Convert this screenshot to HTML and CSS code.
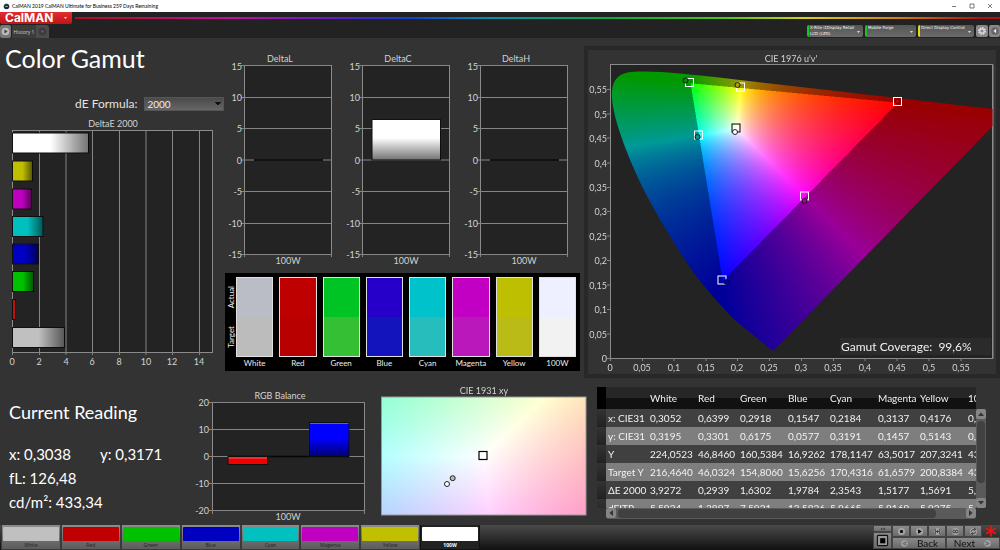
FILE: index.html
```html
<!DOCTYPE html>
<html lang="en">
<head>
<meta charset="utf-8">
<title>CalMAN 2019 CalMAN Ultimate for Business</title>
<link rel="stylesheet" href="styles.css">
</head>
<body>
<div class="app">
  <header class="titlebar">
    <svg class="app-icon" viewBox="0 0 8 8"><circle cx="4" cy="4" r="3.2" fill="#1b2a3a"/><path d="M1.5 2.5A3 3 0 0 1 5 1.3" stroke="#3d8a4c" fill="none"/><path d="M2.5 4h3" stroke="#dde" stroke-width=".8"/></svg>
    <span class="window-title">CalMAN 2019 CalMAN Ultimate for Business 259 Days Remaining</span>
    <div class="window-buttons">
      <button aria-label="Minimize"><svg viewBox="0 0 6 6"><path d="M1 3.5h4" stroke="#444" stroke-width=".7"/></svg></button>
      <button aria-label="Maximize"><svg viewBox="0 0 6 6"><path d="M1 1h4v4h-4z" stroke="#444" stroke-width=".7" fill="none"/></svg></button>
      <button aria-label="Close"><svg viewBox="0 0 6 6"><path d="M1 1l4 4M5 1l-4 4" stroke="#444" stroke-width=".7"/></svg></button>
    </div>
  </header>

  <div class="brandbar">
    <button class="brand"><span>CalMAN</span><svg viewBox="0 0 6 4"><path d="M1 1h4l-2 2z" fill="#fff"/></svg></button>
    <div class="rainbow"></div>
  </div>

  <nav class="tabs">
    <button class="play-tab" aria-label="Play"><svg viewBox="0 0 10 10"><circle cx="5" cy="5" r="3.5" fill="#bbb"/><path d="M4 3.2l3 1.8-3 1.8z" fill="#444"/></svg></button>
    <button class="history-tab">History 1</button>
    <button class="add-tab" aria-label="Add history"><svg viewBox="0 0 10 10"><circle cx="5" cy="5" r="3" fill="#3c3c3c"/><path d="M5 4v2M4 5h2" stroke="#666" stroke-width=".7"/></svg></button>
    <div class="devices">
      <button class="device green"><span>X-Rite i1Display Retail<br>LCD (LED)</span><svg viewBox="0 0 6 4"><path d="M1 1h4l-2 2z" fill="#fff"/></svg></button>
      <button class="device green narrow"><span>Mobile Forge</span><svg viewBox="0 0 6 4"><path d="M1 1h4l-2 2z" fill="#fff"/></svg></button>
      <button class="device yellow"><span>Direct Display Control</span><svg viewBox="0 0 6 4"><path d="M1 1h4l-2 2z" fill="#fff"/></svg></button>
      <button class="tool" aria-label="Settings"><svg viewBox="0 0 10 10"><circle cx="5" cy="5" r="2.6" fill="none" stroke="#ddd" stroke-width="1.4" stroke-dasharray="1.3 .7"/><circle cx="5" cy="5" r="1.8" fill="none" stroke="#ddd"/></svg></button>
      <button class="tool" aria-label="Collapse"><svg viewBox="0 0 10 10"><circle cx="5.5" cy="5" r="3.5" fill="#666"/><path d="M6.500 3v4l-2.500-2z" fill="#eee"/></svg></button>
    </div>
  </nav>

  <main>
    <div class="top-row">
      <section class="gamut">
        <h1>Color Gamut</h1>
        <div class="formula">
          <label for="formula">dE Formula:</label>
          <select id="formula"><option>2000</option><option>1994</option><option>1976</option></select>
        </div>
        <svg class="chart" viewBox="0 116 225 254" role="img" aria-label="DeltaE 2000">
          <defs>
            <linearGradient id="fade-right"><stop offset=".5" stop-color="#000" stop-opacity="0"/><stop offset="1" stop-color="#000" stop-opacity=".55"/></linearGradient>
            <linearGradient id="fade-down" x2="0" y2="1"><stop offset=".45" stop-color="#000" stop-opacity="0"/><stop offset="1" stop-color="#000" stop-opacity=".55"/></linearGradient>
          </defs>
          <rect class="plot" x="12.500" y="130.500" width="200" height="222"/>
          <path class="grid" d="M39.500 130V355M66 130V355M92.500 130V355M119.500 130V355M146 130V355M172.500 130V355M199.500 130V355M12.500 352V355"/>
          <g class="bars">
            <rect x="12.500" y="133" width="76" height="20" fill="#fff"/>
            <rect x="12.500" y="161" width="20" height="20" fill="#bfbf00"/>
            <rect x="12.500" y="189" width="19" height="20" fill="#c000c0"/>
            <rect x="12.500" y="216.500" width="30.500" height="20" fill="#00bfbf"/>
            <rect x="12.500" y="244" width="26" height="20" fill="#0000c0"/>
            <rect x="12.500" y="271.500" width="21" height="20" fill="#00c000"/>
            <rect x="12.500" y="299.500" width="3" height="20" fill="#c01010"/>
            <rect x="12.500" y="327.500" width="52" height="20" fill="#c0c0c0"/>
          </g>
          <g class="shade">
            <rect x="12.500" y="133" width="76" height="20"/><rect x="12.500" y="161" width="20" height="20"/><rect x="12.500" y="189" width="19" height="20"/><rect x="12.500" y="216.500" width="30.500" height="20"/><rect x="12.500" y="244" width="26" height="20"/><rect x="12.500" y="271.500" width="21" height="20"/><rect x="12.500" y="327.500" width="52" height="20"/>
          </g>
          <g class="label mid">
            <text x="113" y="127">DeltaE 2000</text>
            <text x="12" y="365">0</text><text x="39" y="365">2</text><text x="66" y="365">4</text><text x="92" y="365">6</text><text x="119" y="365">8</text><text x="146" y="365">10</text><text x="172" y="365">12</text><text x="199" y="365">14</text>
          </g>
        </svg>
      </section>

      <section class="deltas">
        <svg class="chart" viewBox="225 50 355 218" role="img" aria-label="DeltaL, DeltaC and DeltaH">
          <defs>
            <g id="delta-axes">
              <rect class="plot" x="244.500" y="65.500" width="87" height="189"/>
              <path class="grid" d="M241 65.500H331M241 97.500H331M241 128.500H331M241 160H331M241 191.500H331M241 223.500H331M241 254.500H331M244.500 254V257M331.500 254V257"/>
              <g class="label end">
                <text x="242" y="70">15</text><text x="242" y="101">10</text><text x="242" y="132">5</text><text x="242" y="164">0</text><text x="242" y="195">-5</text><text x="242" y="227">-10</text><text x="242" y="258">-15</text>
              </g>
              <text class="label mid" x="288" y="264">100W</text>
            </g>
          </defs>
          <use href="#delta-axes"/><use href="#delta-axes" x="118"/><use href="#delta-axes" x="236"/>
          <g class="label mid"><text x="280" y="62">DeltaL</text><text x="398" y="62">DeltaC</text><text x="516" y="62">DeltaH</text></g>
          <path d="M254 160H323M490 160H559" stroke="#111" stroke-width="2"/>
          <g class="bars"><rect x="372" y="119.500" width="68.500" height="40.500" fill="#fff"/></g>
          <rect x="372" y="119.500" width="68.500" height="40.500" fill="url(#fade-down)"/>
        </svg>
        <div class="swatches">
          <div class="side"><span>Actual</span><span>Target</span></div>
          <figure class="white"><div></div><figcaption>White</figcaption></figure>
          <figure class="red"><div></div><figcaption>Red</figcaption></figure>
          <figure class="green"><div></div><figcaption>Green</figcaption></figure>
          <figure class="blue"><div></div><figcaption>Blue</figcaption></figure>
          <figure class="cyan"><div></div><figcaption>Cyan</figcaption></figure>
          <figure class="magenta"><div></div><figcaption>Magenta</figcaption></figure>
          <figure class="yellow"><div></div><figcaption>Yellow</figcaption></figure>
          <figure class="full"><div></div><figcaption>100W</figcaption></figure>
        </div>
      </section>

      <section class="cie76">
        <svg class="chart" viewBox="588 50 408 324" role="img" aria-label="CIE 1976 u'v'">
          <rect class="plot" x="610.500" y="64.500" width="382" height="294"/>
          <foreignObject x="610.500" y="65" width="382" height="293"><canvas id="uv" width="764" height="586"></canvas></foreignObject>
          <path class="frame" d="M610.500 64.500H993V358.500H610.500z"/>
          <path class="grid" d="M607 358.500h3M607 334h3M607 309.500h3M607 285h3M607 260.500h3M607 236h3M607 211.500h3M607 187.500h3M607 163h3M607 138h3M607 114h3M607 89.500h3M610.500 358v3M642.500 358v3M674 358v3M706 358v3M737.500 358v3M769.500 358v3M801.500 358v3M833.500 358v3M865 358v3M897 358v3M929 358v3M961 358v3"/>
          <g class="label end">
            <text x="607" y="362">0</text><text x="607" y="338">0,05</text><text x="607" y="313">0,1</text><text x="607" y="289">0,15</text><text x="607" y="264">0,2</text><text x="607" y="240">0,25</text><text x="607" y="215">0,3</text><text x="607" y="191">0,35</text><text x="607" y="167">0,4</text><text x="607" y="142">0,45</text><text x="607" y="118">0,5</text><text x="607" y="93">0,55</text>
          </g>
          <g class="label mid">
            <text x="791" y="62">CIE 1976 u'v'</text>
            <text x="610" y="371">0</text><text x="642" y="371">0,05</text><text x="674" y="371">0,1</text><text x="706" y="371">0,15</text><text x="737" y="371">0,2</text><text x="769" y="371">0,25</text><text x="801" y="371">0,3</text><text x="833" y="371">0,35</text><text x="865" y="371">0,4</text><text x="897" y="371">0,45</text><text x="929" y="371">0,5</text><text x="961" y="371">0,55</text>
          </g>
          <g fill="none" stroke="#fff">
            <rect x="685.500" y="78.500" width="8" height="8"/><rect x="736.500" y="83" width="8" height="8"/><rect x="893.500" y="97.500" width="8" height="8"/><rect x="694.500" y="131" width="8" height="8"/><rect x="800.500" y="192" width="8" height="8"/><rect x="718" y="276" width="8" height="8"/>
            <rect x="732" y="124" width="8" height="8" stroke="#000"/>
          </g>
          <g stroke="#111" stroke-width=".9">
            <circle cx="685.500" cy="80.500" r="2.500" fill="#009000"/><circle cx="737.500" cy="85" r="2.500" fill="#b0a000"/><circle cx="897.500" cy="101.500" r="2.300" fill="#c00010"/><circle cx="697.500" cy="137" r="2.500" fill="#009a9a"/><circle cx="804.500" cy="201" r="2.500" fill="#a000a0"/><circle cx="726.500" cy="282" r="2.500" fill="#0000a0" stroke="#000070"/><circle cx="735" cy="132" r="2.500" fill="#fff"/>
          </g>
          <rect x="840" y="338" width="151" height="17" fill="#2b2b2b"/>
          <text class="coverage" x="841" y="351">Gamut Coverage: &#160;99,6%</text>
        </svg>
      </section>
    </div>

    <div class="bottom-row">
      <section class="reading">
        <h2>Current Reading</h2>
        <p><span>x: 0,3038</span><span>y: 0,3171</span></p>
        <p>fL: 126,48</p>
        <p>cd/m²: 433,34</p>
      </section>
      <svg class="chart" viewBox="190 384 180 140" role="img" aria-label="RGB Balance">
        <rect class="plot" x="212.500" y="402.500" width="152" height="108"/>
        <path class="grid" d="M209 402.500H364M209 429.500H364M209 456.500H364M209 483.500H364M209 510.500H364M212.500 510V514M364.500 510V514"/>
        <path d="M228 456.500H349" stroke="#050505" stroke-width="1.500"/>
        <g class="bars"><rect x="228" y="456.500" width="39.500" height="8" fill="#f00000"/><rect x="309.500" y="422.500" width="39.500" height="34" fill="#0000ff"/></g>
        <rect x="309.500" y="422.500" width="39.500" height="34" fill="url(#fade-down)"/>
        <path d="M228.500 458H267M310 423.500H348.500" stroke="#fff" stroke-opacity=".35"/>
        <g class="label end"><text x="209" y="406">20</text><text x="209" y="433">10</text><text x="209" y="460">0</text><text x="209" y="487">-10</text><text x="209" y="514">-20</text></g>
        <g class="label mid"><text x="280" y="399">RGB Balance</text><text x="288" y="520">100W</text></g>
      </svg>
      <svg class="chart" viewBox="370 384 220 140" role="img" aria-label="CIE 1931 xy">
        <foreignObject x="382" y="397" width="204" height="118"><canvas id="xy" width="204" height="118"></canvas></foreignObject>
        <rect x="381.500" y="397" width="204.500" height="118" fill="none" stroke="#999"/>
        <text class="label mid" x="484" y="394">CIE 1931 xy</text>
        <rect x="479" y="451.500" width="8" height="8" fill="#fff" stroke="#000" stroke-width="1.200"/>
        <circle cx="452.700" cy="478.200" r="2.500" fill="#bbb" stroke="#222"/><circle cx="447" cy="484" r="2.500" fill="#fff" stroke="#222"/>
      </svg>
      <section class="results">
        <div class="table-window">
          <table>
            <colgroup><col class="c-handle"><col class="c-narrow"><col class="c-wide"><col class="c-narrow"><col class="c-wide"><col class="c-narrow"><col class="c-wide"><col class="c-narrow"><col class="c-wide"><col class="c-wide"></colgroup>
            <thead><tr><td></td><td></td><th>White</th><th>Red</th><th>Green</th><th>Blue</th><th>Cyan</th><th>Magenta</th><th>Yellow</th><th>100W</th></tr></thead>
            <tbody>
              <tr><td></td><th>x: CIE31</th><td>0,3052</td><td>0,6399</td><td>0,2918</td><td>0,1547</td><td>0,2184</td><td>0,3137</td><td>0,4176</td><td>0,3038</td></tr>
              <tr><td></td><th>y: CIE31</th><td>0,3195</td><td>0,3301</td><td>0,6175</td><td>0,0577</td><td>0,3191</td><td>0,1457</td><td>0,5143</td><td>0,3171</td></tr>
              <tr><td></td><th>Y</th><td>224,0523</td><td>46,8460</td><td>160,5384</td><td>16,9262</td><td>178,1147</td><td>63,5017</td><td>207,3241</td><td>433,3400</td></tr>
              <tr><td></td><th>Target Y</th><td>216,4640</td><td>46,0324</td><td>154,8060</td><td>15,6256</td><td>170,4316</td><td>61,6579</td><td>200,8384</td><td>433,3400</td></tr>
              <tr><td></td><th>ΔE 2000</th><td>3,9272</td><td>0,2939</td><td>1,6302</td><td>1,9784</td><td>2,3543</td><td>1,5177</td><td>1,5691</td><td>5,7500</td></tr>
              <tr><td></td><th>dEITP</th><td>5,5924</td><td>1,3897</td><td>7,5921</td><td>12,5826</td><td>5,9665</td><td>5,9169</td><td>5,9275</td><td>5,9000</td></tr>
            </tbody>
          </table>
        </div>
        <div class="scroll vertical">
          <button aria-label="Scroll up"><svg viewBox="0 0 8 8"><path d="M1 6l3-3.500 3 3.500z"/></svg></button><div class="thumb"></div><button aria-label="Scroll down"><svg viewBox="0 0 8 8"><path d="M1 2l3 3.500 3-3.500z"/></svg></button>
        </div>
        <div class="scroll horizontal">
          <button aria-label="Scroll left"><svg viewBox="0 0 8 8"><path d="M6 1l-3.500 3 3.500 3z"/></svg></button><div class="thumb"></div><button aria-label="Scroll right"><svg viewBox="0 0 8 8"><path d="M2 1l3.500 3-3.500 3z"/></svg></button>
        </div>
      </section>
    </div>
  </main>

  <footer>
    <div class="patches">
      <button class="white"><i></i>White</button>
      <button class="red"><i></i>Red</button>
      <button class="green"><i></i>Green</button>
      <button class="blue"><i></i>Blue</button>
      <button class="cyan"><i></i>Cyan</button>
      <button class="magenta"><i></i>Magenta</button>
      <button class="yellow"><i></i>Yellow</button>
      <button class="full selected"><i></i>100W</button>
    </div>
    <div class="controls">
      <div class="stop-column">
        <button aria-label="Camera"><svg viewBox="0 0 10 8"><ellipse cx="5" cy="4" rx="3" ry="1.800" fill="#444"/><circle cx="5" cy="4" r=".8" fill="#ccc"/></svg></button>
        <button class="stop" aria-label="Stop"><svg viewBox="0 0 14 14"><rect x="1.500" y="1.500" width="11" height="11" rx="1" fill="#999" stroke="#111" stroke-width="1.200"/><rect x="4.500" y="4.500" width="5.500" height="5.500"/></svg></button>
      </div>
      <div class="transport">
        <button aria-label="Stop reading"><svg viewBox="0 0 10 10"><circle cx="5" cy="5" r="4" fill="#a4a4a4"/><path d="M3.500 3.500h3v3h-3z"/></svg></button>
        <button aria-label="Play reading"><svg viewBox="0 0 10 10"><circle cx="5" cy="5" r="4" fill="#a4a4a4"/><path d="M3.500 2.500l4 2.500-4 2.500z"/></svg></button>
        <button aria-label="Read series"><svg viewBox="0 0 10 10"><circle cx="5" cy="5" r="4" fill="#a4a4a4"/><path d="M2.500 2v6M7.500 2v6M3.500 5h3M5 3.500v3" stroke="#333"/></svg></button>
        <button aria-label="Read continuously"><svg viewBox="0 0 10 10"><circle cx="5" cy="5" r="4" fill="#a4a4a4"/><circle cx="3.500" cy="5" r="1.500" fill="none" stroke="#333"/><circle cx="6.500" cy="5" r="1.500" fill="none" stroke="#333"/></svg></button>
        <button aria-label="Refresh"><svg viewBox="0 0 10 10"><circle cx="5" cy="5" r="4" fill="#a4a4a4"/><path d="M2.500 5q0-2.500 4-2.500M7.500 5q0 2.500-4 2.500M5.500 1l2 1.500-2 1.500M4.500 6l-2 1.500 2 1.500" fill="none" stroke="#333"/></svg></button>
        <svg class="alert" viewBox="0 0 12 12"><path d="M6 .5v11M1.200 3.200l9.600 5.600M10.800 3.200l-9.600 5.600" stroke="#f01212" stroke-width="1.700"/></svg>
      </div>
      <div class="steps">
        <button><svg viewBox="0 0 10 10"><circle cx="5" cy="5" r="3.700" fill="#a4a4a4"/><path d="M5.500 3l-2 2 2 2M7.500 3l-2 2 2 2" fill="none" stroke="#333" stroke-width=".8"/></svg>Back</button>
        <button>Next<svg viewBox="0 0 10 10"><circle cx="5" cy="5" r="3.700" fill="#a4a4a4"/><path d="M2.500 3l2 2-2 2M4.500 3l2 2-2 2" fill="none" stroke="#333" stroke-width=".8"/></svg></button>
      </div>
    </div>
  </footer>
</div>
<script src="charts.js"></script>
</body>
</html>
```

FILE: styles.css
```css
* { box-sizing: border-box; }
body { margin: 0; background: #333; color: #e4e4e4; font-family: Lato, "Open Sans", sans-serif; font-size: 10px; }
button { margin: 0; padding: 0; border: 0; background: none; color: inherit; font-family: inherit; font-size: inherit; }
svg { display: block; }
.app { min-height: 100vh; display: flex; flex-direction: column; overflow: hidden; }

.titlebar { height: 12px; background: #fff; color: #000; display: flex; align-items: center; padding: 0 4px 0 3px; gap: 2px; font: 5px Lato, sans-serif; }
.app-icon { width: 7px; height: 7px; }
.window-buttons { margin-left: auto; display: flex; gap: 12px; padding-right: 3px; }
.window-buttons svg { width: 6px; height: 6px; }

.brandbar { height: 12px; background: #222; display: flex; align-items: center; }
.brand { width: 72px; height: 12px; display: flex; align-items: center; justify-content: space-between; padding: 0 4px 0 5px; background: linear-gradient(#e03030, #c01418); color: #fff; font: bold 12px/12px Inter, sans-serif; border-radius: 0 0 2px 2px; }
.brand svg { width: 5px; height: 4px; }
.rainbow { flex: 1; height: 2px; margin-left: 3px; background: linear-gradient(90deg, #b01018, #c010a0 17%, #5a20c8 29%, #1040d0 36%, #0890b0 45%, #10a840 58%, #50c020 70%, #d8d020 79%, #d08018 89%, #b01010 98%); }

.tabs { height: 14px; background: #222; display: flex; align-items: stretch; padding-top: 1px; font: 5px "Open Sans", sans-serif; }
.play-tab { width: 11px; background: #777; border-radius: 2px; }
.play-tab svg, .add-tab svg, .tool svg { width: 100%; height: 100%; }
.history-tab { width: 24px; margin-left: 1px; background: #3c3c3c; color: #ccc; }
.add-tab { width: 13px; background: #4c4c4c; border-radius: 0 3px 0 0; }
.devices { margin-left: auto; display: flex; gap: 2px; }
.device { width: 56px; height: 12px; display: flex; align-items: flex-start; justify-content: space-between; text-align: left; background: linear-gradient(#555, #6a6a6a); border-left: 2px solid #1fc01f; border-radius: 2px; line-height: 5px; padding: 0 2px 0 1px; white-space: nowrap; color: #fff; font: 4px/6px "DejaVu Sans", sans-serif; }
.device.narrow { width: 51px; }
.device.yellow { border-color: #e0e010; }
.device svg { width: 5px; height: 4px; margin: 5px 0 0 -2px; flex: none; }
.tool { width: 12px; height: 12px; background: #888; border-radius: 2px; }
.tool + .tool { margin-left: -1px; width: 11px; }

main { flex: 1; background: #333; }
.top-row { display: grid; grid-template-columns: 225fr 359fr 416fr; padding-top: 8px; align-items: start; }
h1 { margin: 0; padding-left: 5px; font-weight: 400; font-size: 25px; line-height: 25px; color: #fff; }
.formula { display: flex; align-items: center; gap: 7px; height: 13px; margin: 26px 0 6px 0; padding: 0 1px 0 75px; font-size: 12px; }
.formula label { white-space: nowrap; }
select { appearance: none; flex: 1; min-width: 0; height: 14px; border: 1px solid #555; border-radius: 0; padding: 0 2px; color: #eee; font: 10px/12px Lato, sans-serif; background: linear-gradient(to bottom left, #111 50%, transparent 50%) right 5px center / 3px 4px no-repeat, linear-gradient(to bottom right, #111 50%, transparent 50%) right 2px center / 3px 4px no-repeat, linear-gradient(#4a4a4a, #666); }
.chart { width: 100%; height: auto; }
.plot { fill: #232323; stroke: #8b8b8b; }
.frame { fill: none; stroke: #8b8b8b; }
.grid { fill: none; stroke: #858585; }
.label { fill: #d2d2d2; font-size: 9px; }
.mid { text-anchor: middle; }
.end { text-anchor: end; }
.bars { stroke: #101010; }
.shade { fill: url(#fade-right); }
.coverage { fill: #f0f0f0; font-size: 12px; }
canvas { display: block; width: 100%; height: 100%; }

.deltas { padding: 4px 4px 0 0; }
.swatches { background: #000; margin-top: 5px; padding: 4px 4px 0 1px; height: 98px; display: flex; gap: 6px; color: #eee; font-size: 8px; }
.side { width: 10px; height: 80px; display: flex; flex-direction: column; justify-content: space-around; align-items: center; margin-right: -6px; flex: none; }
.side span { writing-mode: vertical-rl; transform: rotate(180deg); line-height: 9px; }
figure { margin: 0; flex: 1; min-width: 0; display: flex; flex-direction: column; align-items: center; }
figure div { width: 100%; height: 80px; border: 1px solid #e0e0e0; background: linear-gradient(var(--actual) 50%, var(--target) 50%); }
figcaption { line-height: 13px; }
.white { --actual: #babdc5; --target: #bcbcbc; --patch: #c0c0c0; }
.red { --actual: #be0000; --target: #b80000; --patch: #c00000; }
.green { --actual: #00c324; --target: #34bf34; --patch: #00c000; }
.blue { --actual: #2600c8; --target: #1414bc; --patch: #0000c0; }
.cyan { --actual: #00c2ca; --target: #28bdbd; --patch: #00c0c0; }
.magenta { --actual: #c200c4; --target: #bb18bb; --patch: #c000c0; }
.yellow { --actual: #bdbf00; --target: #bbbb18; --patch: #c0c000; }
.full { --actual: #eef0ff; --target: #f2f2f2; --patch: #fff; }

.cie76 { border: 4px solid #282828; }

.bottom-row { display: grid; grid-template-columns: 190fr 180fr 220fr 410fr; align-items: start; padding-top: 5px; }
.reading { padding: 19px 0 0 9px; color: #fff; }
h2 { margin: 0 0 20px; font-weight: 400; font-size: 18px; line-height: 20px; }
.reading p { margin: 0; font-size: 15px; line-height: 24px; display: flex; gap: 29px; white-space: nowrap; }
.bottom-row .chart { margin-top: 1px; }
.results { display: grid; grid-template-columns: 1fr 10px; grid-template-rows: 22px 99px 11px; padding: 4px 14px 0 7px; }
.table-window { grid-area: 1 / 1 / 3 / 2; overflow: hidden; }
table { border-collapse: collapse; table-layout: fixed; width: 410px; color: #f2f2f2; }
.c-handle { width: 9px; }
.c-narrow { width: 42px; }
.c-wide { width: 48px; }
th, td { height: 18px; padding: 0 0 0 2px; text-align: left; font-weight: 400; line-height: 16px; white-space: nowrap; }
thead th, thead td { height: 22px; background: linear-gradient(#262626 50%, #111 50%); }
thead td:first-child { background: #000; }
tbody tr { background: #404040; }
tbody tr:nth-child(even) { background: #7e7e7e; }
tbody td:first-child { background: linear-gradient(#333, #222); }
.scroll { background: #5a5a5a; display: flex; border-radius: 3px; }
.scroll button { width: 10px; height: 10px; background: #858585; border-radius: 2px; flex: none; }
.scroll svg { width: 8px; height: 8px; margin: 1px; fill: #333; }
.thumb { background: #414141; border-radius: 4px; }
.vertical { grid-area: 2 / 2; flex-direction: column; justify-content: space-between; }
.vertical .thumb { height: 62px; margin: 2px 1px auto; }
.horizontal { grid-area: 3 / 1; margin-left: 9px; justify-content: space-between; }
.horizontal .thumb { width: 86%; margin: 1px auto 0 2px; height: 9px; }

footer { height: 25px; background: linear-gradient(#4a4a4a, #111); display: flex; justify-content: space-between; }
.patches { display: flex; flex: 0 0 48%; padding-left: 1px; }
.patches button { flex: 1; min-width: 0; background: linear-gradient(#8c8c8c, #5c5c5c); border: 1px solid #3a3a3a; border-top: 0; padding: 2px 1px 0; font: 5px/8px "Open Sans", sans-serif; color: #222; }
.patches i { display: block; height: 14px; background: var(--patch); border-radius: 1px; }
.patches .selected { background: #222; color: #fff; font-weight: 700; border-color: #111; }
.controls { display: grid; grid-template: 12px 12px / 19px 1fr; width: 127px; padding-bottom: 1px; }
.controls button { background: linear-gradient(#8a8a8a, #6a6a6a); border: 1px solid #444; }
.stop-column { grid-row: 1 / 3; display: flex; flex-direction: column; }
.stop-column button { height: 7px; display: flex; justify-content: center; align-items: center; }
.stop-column svg { width: 10px; height: 6px; }
.stop-column .stop { height: 17px; }
.stop-column .stop svg { width: 13px; height: 13px; }
.transport { display: flex; }
.transport button { flex: 1; display: flex; justify-content: center; align-items: center; }
.transport button svg { width: 9px; height: 9px; }
.alert { width: 12px; height: 12px; margin: 0 3px; }
.steps { display: flex; color: #111; font-size: 10px; }
.steps button { flex: 1; display: flex; align-items: center; justify-content: center; gap: 8px; line-height: 10px; }
.steps svg { width: 9px; height: 9px; }
```

FILE: charts.js
```js
// Wavelength locus, CIE 1931 x,y pairs from violet to red.
const LOCUS = [
  [.1733, .0048], [.1714, .0051], [.1644, .0109], [.1566, .0177], [.1440, .0297], [.1241, .0578],
  [.1096, .0868], [.0913, .1327], [.0687, .2007], [.0454, .2950], [.0235, .4127], [.0082, .5384],
  [.0039, .6548], [.0139, .7502], [.0389, .8120], [.0743, .8338], [.1142, .8262], [.1547, .8059],
  [.2296, .7543], [.3016, .6923], [.3731, .6245], [.4441, .5547], [.5125, .4866], [.5752, .4242],
  [.6270, .3725], [.6915, .3083], [.7347, .2653]
];

// Brightest displayable colour for a chromaticity; dimmed when it is out of gamut.
function colour(x, y, dim) {
  const X = x / y, Z = (1 - x - y) / y;
  const lin = [
    3.2406 * X - 1.5372 - 0.4986 * Z,
    -0.9689 * X + 1.8758 + 0.0415 * Z,
    0.0557 * X - 0.2040 + 1.0570 * Z
  ];
  const outside = lin.some(v => v < -0.0005);
  const max = Math.max(...lin);
  return lin.map(v => 255 * Math.pow(Math.max(0, v) / max, 0.85) * (outside ? dim : 1));
}

function paint(width, height, toXY, dim) {
  const layer = document.createElement('canvas');
  layer.width = width;
  layer.height = height;
  const ctx = layer.getContext('2d');
  const image = ctx.createImageData(width, height);
  for (let j = 0; j < height; j++) {
    for (let i = 0; i < width; i++) {
      const [x, y] = toXY((i + .5) / width, 1 - (j + .5) / height);
      image.data.set([...colour(x, y, dim), 255], 4 * (j * width + i));
    }
  }
  ctx.putImageData(image, 0, 0);
  return layer;
}

function drawUV() {
  const canvas = document.getElementById('uv');
  const { width: w, height: h } = canvas;
  const ctx = canvas.getContext('2d');
  const layer = paint(w, h, (a, b) => {
    const u = a * .6, v = b * .6, d = 6 * u - 16 * v + 12;
    return [9 * u / d, 4 * v / d];
  }, .6);
  const points = LOCUS.map(([x, y]) => {
    const d = -2 * x + 12 * y + 3;
    return [4 * x / d / .6 * w, h - 9 * y / d / .6 * h];
  });
  // Catmull-Rom spline through the locus points.
  const last = points.length - 1;
  ctx.beginPath();
  ctx.moveTo(...points[0]);
  for (let i = 0; i < last; i++) {
    const p0 = points[Math.max(0, i - 1)], p1 = points[i], p2 = points[i + 1], p3 = points[Math.min(last, i + 2)];
    ctx.bezierCurveTo(
      p1[0] + (p2[0] - p0[0]) / 6, p1[1] + (p2[1] - p0[1]) / 6,
      p2[0] - (p3[0] - p1[0]) / 6, p2[1] - (p3[1] - p1[1]) / 6,
      p2[0], p2[1]
    );
  }
  ctx.closePath();
  ctx.clip();
  ctx.drawImage(layer, 0, 0);
}

function drawXY() {
  const canvas = document.getElementById('xy');
  const layer = paint(canvas.width, canvas.height, (a, b) => [.2877 + a * .05, .304 + b * .05], 1);
  canvas.getContext('2d').drawImage(layer, 0, 0);
}

drawUV();
drawXY();
```
